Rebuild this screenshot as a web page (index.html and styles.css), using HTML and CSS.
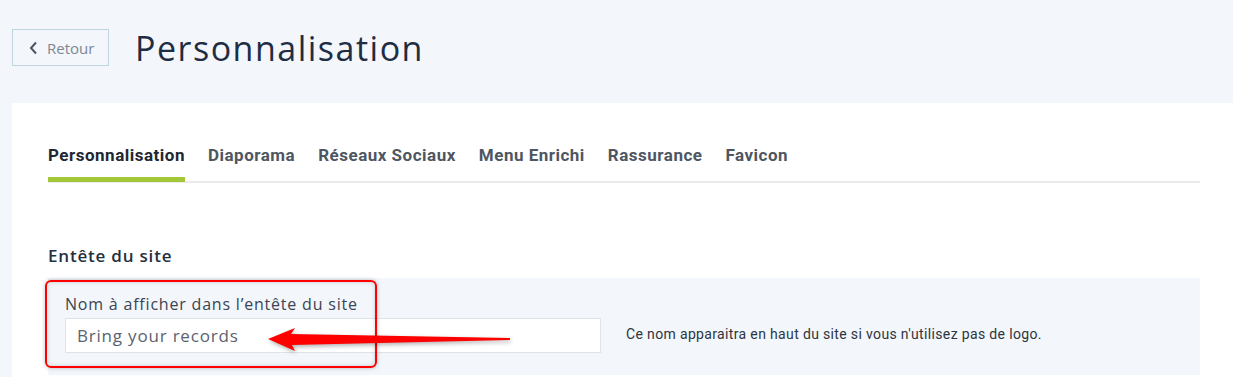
FILE: index.html
```html
<!DOCTYPE html>
<html lang="fr">

<head>
  <meta charset="UTF-8">
  <meta name="viewport" content="width=device-width, initial-scale=1.0">
  <title>Personnalisation</title>
  <link rel="stylesheet" href="styles.css">
</head>

<body>

  <header class="page-header">
    <button class="back-btn">
      <svg width="9" height="14" viewBox="0 0 9 14"><path d="M7 1.5 L2 7 L7 12.5" fill="none" stroke="#4a5563" stroke-width="2"/></svg>
      Retour
    </button>
    <h1>Personnalisation</h1>
  </header>

  <div class="card">
    <ul class="tabs">
      <li class="active">Personnalisation</li>
      <li>Diaporama</li>
      <li>Réseaux Sociaux</li>
      <li>Menu Enrichi</li>
      <li>Rassurance</li>
      <li>Favicon</li>
    </ul>

    <h2>Entête du site</h2>

    <div class="panel">
      <label for="siteName">Nom à afficher dans l’entête du site</label>
      <div class="field-row">
        <input type="text" id="siteName" value="Bring your records" />
        <span class="help">Ce nom apparaitra en haut du site si vous n'utilisez pas de logo.</span>
      </div>

      <!-- annotation -->
      <div class="mark-box"></div>
      <svg class="mark-arrow" width="250" height="30" viewBox="0 0 250 30">
        <polygon points="0,11 27,0 23,6 242,10 242,12 24,17 27,23" fill="#ff0000"/>
      </svg>
    </div>
  </div>

</body>

</html>
```

FILE: styles.css
```css
body {
  margin: 0;
  background-color: #f3f6fa;
  font-family: "Open Sans", Arial, sans-serif;
  color: #1e2d44;
}

.page-header {
  display: flex;
  align-items: center;
  gap: 26px;
  height: 103px;
  padding: 0 12px;
  box-sizing: border-box;
}

.back-btn {
  display: flex;
  align-items: center;
  gap: 9px;
  width: 97px;
  height: 37px;
  padding: 0 0 0 16px;
  margin-top: -8px;
  border: 1px solid #bfd6e2;
  background: #f3f6fa;
  color: #7c8794;
  font-family: "Open Sans", Arial, sans-serif;
  font-size: 15px;
  cursor: pointer;
}

h1 {
  margin: -8px 0 0;
  font-size: 34px;
  font-weight: 500;
  color: #1e2d44;
  letter-spacing: 1.5px;
}

.card {
  margin-left: 12px;
  background: #fff;
  padding: 36px 33px 0 36px;
  min-height: 274px;
}

.tabs {
  display: flex;
  gap: 23px;
  list-style: none;
  margin: 0;
  padding: 0;
  border-bottom: 2px solid #ebebeb;
  font-family: Roboto, Arial, sans-serif;
  font-weight: bold;
  font-size: 17px;
  letter-spacing: 0.5px;
}

.tabs li {
  padding: 6px 0 12px;
  color: #4e5662;
  border-bottom: 5px solid transparent;
  margin-bottom: -1px;
}

.tabs li.active {
  color: #1f2733;
  border-bottom-color: #a4c639;
}

h2 {
  margin: 61px 0 0;
  font-size: 17px;
  font-weight: 600;
  color: #26303d;
  letter-spacing: 0.8px;
  height: 34px;
}

.panel {
  position: relative;
  background: #f3f6fa;
  padding: 15px 17px 22px;
}

label {
  display: block;
  font-size: 16px;
  letter-spacing: 0.8px;
  color: #3a4452;
  margin-bottom: 3px;
}

.field-row {
  display: flex;
  align-items: center;
  gap: 25px;
}

.field-row input {
  width: 536px;
  height: 35px;
  box-sizing: border-box;
  border: 1px solid #dfe3e8;
  padding: 0 11px;
  font-family: "Open Sans", Arial, sans-serif;
  font-size: 17px;
  letter-spacing: 0.8px;
  color: #5a6270;
}

.help {
  font-family: Roboto, Arial, sans-serif;
  font-size: 14px;
  letter-spacing: 0.35px;
  color: #2d3540;
  margin-top: -4px;
}

.mark-box {
  position: absolute;
  left: -3px;
  top: 2px;
  width: 328px;
  height: 84px;
  border: 2px solid #ff0000;
  border-radius: 6px;
  box-shadow: 0 0 4px rgba(0, 0, 0, 0.25), inset 0 0 4px rgba(0, 0, 0, 0.18);
}

.mark-arrow {
  position: absolute;
  left: 220px;
  top: 50px;
  filter: drop-shadow(1px 2px 2px rgba(0, 0, 0, 0.3));
}
```
